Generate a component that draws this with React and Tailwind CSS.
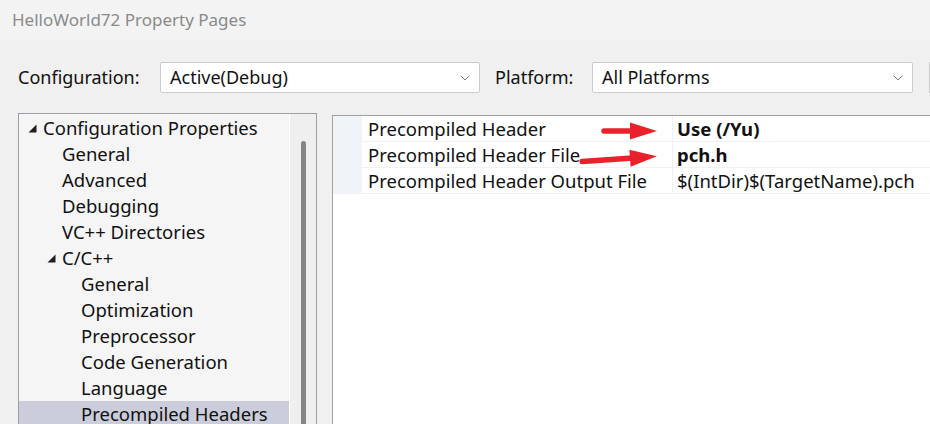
import { ChevronDown } from 'lucide-react';

const font = { fontFamily: '"Noto Sans", "Open Sans", sans-serif' };

const tree = [
    { label: 'Configuration Properties', level: 0, open: true },
    { label: 'General', level: 1 },
    { label: 'Advanced', level: 1 },
    { label: 'Debugging', level: 1 },
    { label: 'VC++ Directories', level: 1 },
    { label: 'C/C++', level: 1, open: true },
    { label: 'General', level: 2 },
    { label: 'Optimization', level: 2 },
    { label: 'Preprocessor', level: 2 },
    { label: 'Code Generation', level: 2 },
    { label: 'Language', level: 2 },
    { label: 'Precompiled Headers', level: 2, selected: true },
];

const indent = ['pl-[9px]', 'pl-[28px]', 'pl-[47px]'];

const props = [
    { name: 'Precompiled Header', value: 'Use (/Yu)', bold: true },
    { name: 'Precompiled Header File', value: 'pch.h', bold: true },
    { name: 'Precompiled Header Output File', value: '$(IntDir)$(TargetName).pch' },
];

// filled corner triangle used by expanded tree nodes
const Expander = () => (
    <svg width="9" height="9" viewBox="0 0 9 9" className="shrink-0">
        <path d="M8.5 0.5 L8.5 8.5 L0.5 8.5 Z" fill="#1e1e1e" />
    </svg>
);

const Combo = ({ value, width }) => (
    <div className={`${width} shrink-0 h-[31px] bg-white border border-[#cccccc] rounded-[2px] flex items-center pl-[9px] pr-[6px]`}>
        <span className="flex-1 text-[18px] text-[#111]">{value}</span>
        <ChevronDown size={16} strokeWidth={1.2} className="text-[#555]" />
    </div>
);

const RedArrow = ({ className, length, tilt = 0 }) => (
    <svg width={length + 4} height="24" viewBox={`0 0 ${length + 4} 24`} className={className} style={{ transform: `rotate(${tilt}deg)` }}>
        <line x1="3" y1="12" x2={length - 22} y2="12" stroke="#e8212b" strokeWidth="5.5" strokeLinecap="round" />
        <path d={`M${length - 25} 3.5 L${length + 2} 12 L${length - 25} 20.5 Z`} fill="#e8212b" />
    </svg>
);

export default function App() {
    return (
        <div className="relative w-[930px] h-[424px] overflow-hidden bg-[#f0f0f0] text-[#111]" style={font}>
            <div className="h-[40px] bg-[#f3f3f3] flex items-center pl-[12px] text-[17px] text-[#8a8a8a]">
                HelloWorld72 Property Pages
            </div>

            <div className="mt-[22px] h-[31px] flex items-center">
                <span className="ml-[18px] w-[142px] shrink-0 text-[18px]">Configuration:</span>
                <Combo value="Active(Debug)" width="w-[320px]" />
                <span className="ml-[15px] w-[97px] shrink-0 text-[18px]">Platform:</span>
                <Combo value="All Platforms" width="w-[321px]" />
                <div className="ml-[16px] w-[10px] shrink-0 h-[31px] bg-white border border-[#cccccc]" />
            </div>

            <div className="mt-[20px] flex items-start">
                {/* category tree */}
                <div className="ml-[18px] w-[299px] shrink-0 h-[320px] border border-[#9aa0a6] bg-[#f5f5f5] flex">
                    <div className="w-[270px] pt-[1px]">
                        {tree.map((item, i) => (
                            <div
                                key={i}
                                className={`h-[26px] flex items-center text-[18.5px] ${indent[item.level]} ${item.selected ? 'bg-[#cbcdda]' : ''}`}
                            >
                                <div className="w-[15px] shrink-0 flex items-center">
                                    {item.open ? <Expander /> : null}
                                </div>
                                <span className="whitespace-nowrap">{item.label}</span>
                            </div>
                        ))}
                    </div>
                    <div className="flex-1 border-l border-white bg-[#efefef] flex justify-center pt-[27px]">
                        <div className="w-[5px] h-[300px] rounded-full bg-[#868686]" />
                    </div>
                </div>

                {/* property grid */}
                <div className="ml-[15px] mt-[2px] flex-1 h-[320px] border-l border-t border-[#a0a0a0] bg-white">
                    {props.map((p, i) => (
                        <div key={i} className="h-[26px] flex text-[18.5px]">
                            <div className="w-[29px] shrink-0 bg-[#f0f4f9]" />
                            <div className="w-[310px] shrink-0 border-b border-[#eef1f5] pl-[6px] flex items-center whitespace-nowrap">{p.name}</div>
                            <div className="w-px bg-[#eef1f5]" />
                            <div className={`flex-1 border-b border-[#eef1f5] pl-[4px] flex items-center whitespace-nowrap ${p.bold ? 'font-bold' : ''}`}>
                                {p.value}
                            </div>
                        </div>
                    ))}
                </div>
            </div>

            {/* annotation arrows */}
            <RedArrow className="absolute left-[601px] top-[119px]" length={54} />
            <RedArrow className="absolute left-[579px] top-[147px]" length={76} tilt={-4} />
        </div>
    );
}
